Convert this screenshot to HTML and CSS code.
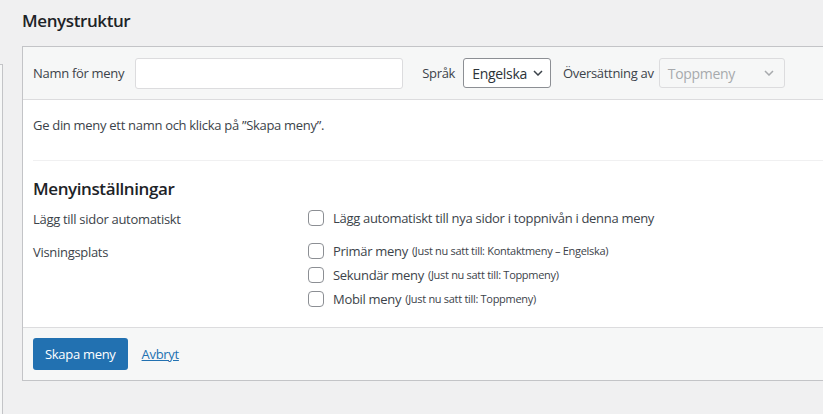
FILE: index.html
```html
<!DOCTYPE html>
<html lang="sv">
<head>
    <meta charset="UTF-8">
    <title>Menystruktur</title>
    <link rel="stylesheet" href="styles.css">
</head>
<body>
    <div class="page">
        <div class="side-col">
            <div class="side-box"></div>
        </div>

        <div class="main-col">
            <h2 class="title">Menystruktur</h2>

            <div class="menu-box">
                <div class="menu-head">
                    <label class="lbl" for="menuName">Namn för meny</label>
                    <input type="text" id="menuName" class="name-input">

                    <span class="lbl lang-lbl">Språk</span>
                    <div class="fake-select">
                        <span>Engelska</span>
                        <svg width="10" height="6" viewBox="0 0 10 6"><polyline points="1,1 5,5 9,1" fill="none" stroke="#3c434a" stroke-width="1.5"/></svg>
                    </div>

                    <span class="lbl trans-lbl">Översättning av</span>
                    <div class="fake-select disabled">
                        <span>Toppmeny</span>
                        <svg width="10" height="6" viewBox="0 0 10 6"><polyline points="1,1 5,5 9,1" fill="none" stroke="#a7aaad" stroke-width="1.5"/></svg>
                    </div>
                </div>

                <div class="menu-body">
                    <p class="intro">Ge din meny ett namn och klicka på ”Skapa meny”.</p>
                    <div class="divider"></div>

                    <h3 class="settings-title">Menyinställningar</h3>

                    <div class="setting-row">
                        <div class="setting-name">Lägg till sidor automatiskt</div>
                        <div class="setting-opts">
                            <label class="check"><input type="checkbox"> Lägg automatiskt till nya sidor i toppnivån i denna meny</label>
                        </div>
                    </div>

                    <div class="setting-row locations">
                        <div class="setting-name">Visningsplats</div>
                        <div class="setting-opts">
                            <label class="check"><input type="checkbox"> Primär meny <span class="note">(Just nu satt till: Kontaktmeny – Engelska)</span></label>
                            <label class="check"><input type="checkbox"> Sekundär meny <span class="note">(Just nu satt till: Toppmeny)</span></label>
                            <label class="check"><input type="checkbox"> Mobil meny <span class="note">(Just nu satt till: Toppmeny)</span></label>
                        </div>
                    </div>
                </div>

                <div class="menu-foot">
                    <button class="btn-primary">Skapa meny</button>
                    <a href="#" class="cancel">Avbryt</a>
                </div>
            </div>
        </div>
    </div>
</body>
</html>
```

FILE: styles.css
```css
body {
    margin: 0;
    background: #f0f0f1;
    color: #3c434a;
    font-family: "Open Sans", "Noto Sans", sans-serif;
    font-size: 13px;
    letter-spacing: -0.3px;
    overflow: hidden;
}

.page {
    display: flex;
    height: 414px;
}

/* kolumnen till vänster, syns bara som en kant */
.side-col {
    flex: 0 0 3px;
    padding-top: 64px;
    margin-right: 19px;
}

.side-box {
    height: 100%;
    background: #f6f7f7;
    border-top: 1px solid #c3c4c7;
    border-right: 1px solid #c3c4c7;
}

.main-col {
    flex: 0 0 900px;
}

.title {
    margin: 0;
    padding-top: 9px;
    height: 46px;
    box-sizing: border-box;
    font-size: 17px;
    font-weight: 600;
    letter-spacing: -0.4px;
    color: #1d2327;
}

.menu-box {
    border: 1px solid #c3c4c7;
    background: #fff;
}

.menu-head {
    display: flex;
    align-items: center;
    height: 52px;
    padding: 0 10px;
    background: #f6f7f7;
    border-bottom: 1px solid #dcdcde;
}

.lbl {
    white-space: nowrap;
}

.name-input {
    width: 268px;
    height: 31px;
    margin-left: 11px;
    box-sizing: border-box;
    border: 1px solid #dcdcde;
    border-radius: 3px;
    background: #fff;
}

.lang-lbl {
    margin-left: 19px;
    margin-right: 8px;
}

.fake-select {
    display: flex;
    align-items: center;
    justify-content: space-between;
    height: 30px;
    box-sizing: border-box;
    padding: 0 7px 0 8px;
    border: 1px solid #8c8f94;
    border-radius: 3px;
    background: #fff;
    color: #2c3338;
    font-size: 14px;
    gap: 6px;
}

.fake-select.disabled {
    width: 126px;
    border-color: #dcdcde;
    background: #f6f7f7;
    color: #a7aaad;
    padding-right: 10px;
}

.trans-lbl {
    margin-left: 12px;
    margin-right: 5px;
}

.menu-body {
    padding: 0 0 0 10px;
    height: 227px;
    box-sizing: border-box;
}

.intro {
    margin: 0;
    padding-top: 16px;
    height: 60px;
    box-sizing: border-box;
}

.divider {
    border-top: 1px solid #f0f0f1;
}

.settings-title {
    margin: 0;
    padding-top: 16px;
    height: 48px;
    box-sizing: border-box;
    font-size: 17px;
    font-weight: 600;
    letter-spacing: -0.4px;
    color: #1d2327;
}

.setting-row {
    display: flex;
}

.setting-name {
    width: 275px;
    padding-top: 1px;
}

.setting-opts {
    display: flex;
    flex-direction: column;
    gap: 6px;
}

.locations {
    margin-top: 14px;
}

.check {
    display: flex;
    align-items: center;
    gap: 9px;
    line-height: 18px;
    white-space: nowrap;
}

.check input {
    appearance: none;
    margin: 0;
    width: 16px;
    height: 16px;
    border: 1px solid #8c8f94;
    border-radius: 4px;
    background: #fff;
}

.note {
    font-size: 11px;
    margin-left: -5px;
}

.menu-foot {
    display: flex;
    align-items: center;
    height: 52px;
    padding: 0 10px;
    background: #f6f7f7;
    border-top: 1px solid #dcdcde;
}

.btn-primary {
    height: 32px;
    padding: 0 12px;
    border: none;
    border-radius: 3px;
    background: #2271b1;
    color: #fff;
    font-family: inherit;
    font-size: 13px;
    letter-spacing: -0.3px;
}

.cancel {
    margin-left: 14px;
    color: #2271b1;
}
```
